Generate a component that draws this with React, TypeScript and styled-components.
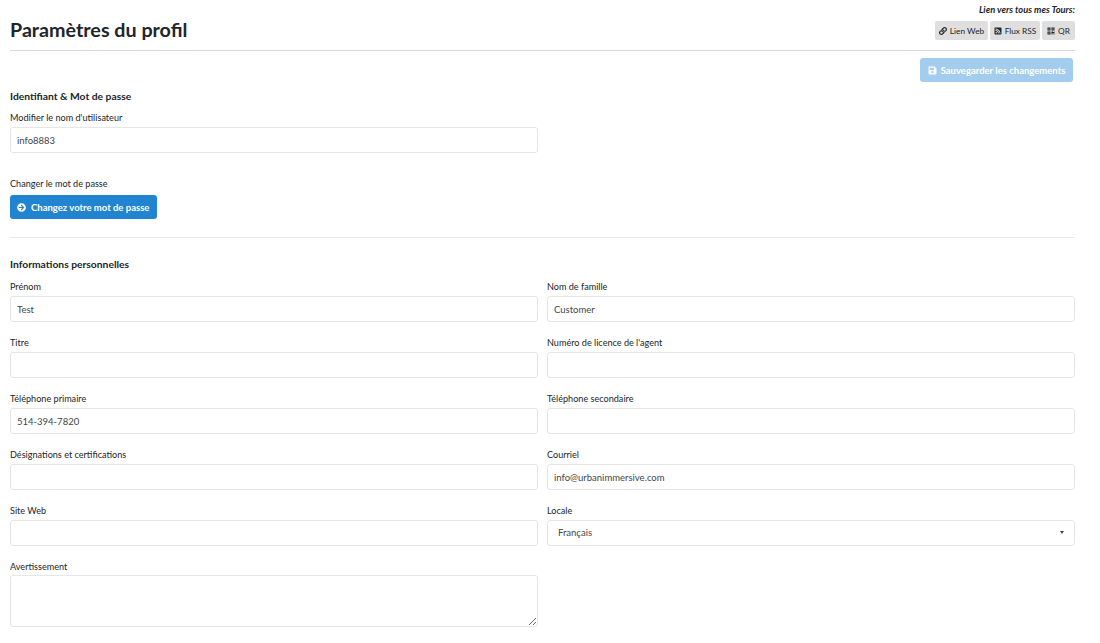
import React from "react";
import styled, { createGlobalStyle } from "styled-components";
import { FaLink, FaSave, FaArrowCircleRight, FaRssSquare, FaQrcode } from "react-icons/fa";

const GlobalStyle = createGlobalStyle`
  html, body {
    margin: 0;
    padding: 0;
    background: #fff;
    font-family: Lato, "Liberation Sans", sans-serif;
    color: #212529;
  }
`;

const Page = styled.div`
  width: 1065px;
  height: 643px;
  overflow: hidden;
  padding-left: 10px;
`;

const Header = styled.header`
  display: flex;
  justify-content: space-between;
  align-items: flex-end;
  height: 50px;
  border-bottom: 1px solid #d9d9d9;
`;

const Title = styled.h1`
  margin: 0 0 8px 0;
  font-size: 19.7px;
  line-height: 24px;
  font-weight: 700;
  color: #212529;
`;

const TourLinks = styled.div`
  display: flex;
  flex-direction: column;
  align-items: flex-end;
  padding-bottom: 10px;
`;

const TourLabel = styled.span`
  font-size: 9.3px;
  line-height: 12px;
  font-style: italic;
  font-weight: 700;
  margin-bottom: 5px;
`;

const TourButtons = styled.div`
  display: flex;
  gap: 2px;
`;

const TourButton = styled.button<{ $width: number }>`
  display: flex;
  align-items: center;
  justify-content: center;
  gap: 3px;
  width: ${(props) => props.$width}px;
  height: 19px;
  padding: 0;
  border: none;
  border-radius: 2px;
  background: #dfdfdf;
  color: #212529;
  font-family: inherit;
  font-size: 8.3px;
  white-space: nowrap;
`;

const SaveRow = styled.div`
  display: flex;
  justify-content: flex-end;
  padding: 7px 2px 0 0;
`;

const SaveButton = styled.button`
  display: flex;
  align-items: center;
  justify-content: center;
  gap: 4px;
  height: 24px;
  width: 153px;
  padding: 0;
  border: none;
  border-radius: 3px;
  background: #a3cdee;
  color: #fff;
  font-family: inherit;
  font-size: 9.5px;
  font-weight: 700;
  white-space: nowrap;
`;

const SectionTitle = styled.h2`
  margin: 0;
  font-size: 10.3px;
  line-height: 14px;
  font-weight: 700;
  color: #212529;
`;

const AccountSection = styled.section`
  margin-top: 7px;
  border-bottom: 1px solid #e8e8e8;
  padding-bottom: 18px;
`;

const HalfColumn = styled.div`
  width: 528px;
`;

const Label = styled.label`
  display: block;
  height: 13px;
  font-size: 9.1px;
  line-height: 13px;
  color: #212529;
`;

const Field = styled.div<{ $spaced?: boolean }>`
  display: flex;
  flex-direction: column;
  gap: 3px;
  margin-top: ${(props) => (props.$spaced ? "8px" : "0")};
`;

const TextInput = styled.input`
  box-sizing: border-box;
  width: 100%;
  height: 26px;
  padding: 0 6px;
  border: 1px solid #e6e6e6;
  border-radius: 3px;
  background: #fff;
  color: #3f464c;
  font-family: inherit;
  font-size: 9.5px;
  outline: none;
`;

const TextArea = styled.textarea`
  box-sizing: border-box;
  display: block;
  width: 100%;
  height: 52px;
  margin-top: -1px;
  padding: 6px;
  border: 1px solid #e6e6e6;
  border-radius: 3px;
  background: #fff;
  font-family: inherit;
  font-size: 9.5px;
  outline: none;
`;

const SelectBox = styled.div`
  box-sizing: border-box;
  display: flex;
  align-items: center;
  justify-content: space-between;
  height: 26px;
  padding: 0 10px 1px 10px;
  border: 1px solid #e6e6e6;
  border-radius: 3px;
  color: #3f464c;
  font-size: 9.5px;
`;

const Caret = styled.span`
  width: 0;
  height: 0;
  border-left: 2.5px solid transparent;
  border-right: 2.5px solid transparent;
  border-top: 3px solid #444;
`;

const PasswordField = styled.div`
  margin-top: 24px;
`;

const PasswordButton = styled.button`
  display: flex;
  align-items: center;
  gap: 5px;
  width: 147px;
  height: 24px;
  margin-top: 5px;
  padding: 0 0 0 7px;
  border: none;
  border-radius: 3px;
  background: #2184d0;
  color: #fff;
  font-family: inherit;
  font-size: 9.5px;
  font-weight: 700;
  white-space: nowrap;
`;

const PersonalSection = styled.section`
  margin-top: 19px;
`;

const FieldGrid = styled.div`
  display: grid;
  grid-template-columns: 528px 528px;
  column-gap: 9px;
  row-gap: 14px;
  margin-top: 9px;
`;

const personalFields = [
  { label: "Prénom", value: "Test" },
  { label: "Nom de famille", value: "Customer" },
  { label: "Titre", value: "" },
  { label: "Numéro de licence de l'agent", value: "" },
  { label: "Téléphone primaire", value: "514-394-7820" },
  { label: "Téléphone secondaire", value: "" },
  { label: "Désignations et certifications", value: "" },
  { label: "Courriel", value: "info@urbanimmersive.com" },
  { label: "Site Web", value: "" },
];

export default function App() {
  return (
    <Page>
      <GlobalStyle />
      <Header>
        <Title>Paramètres du profil</Title>
        <TourLinks>
          <TourLabel>Lien vers tous mes Tours:</TourLabel>
          <TourButtons>
            <TourButton $width={53}>
              <FaLink size={8} /> Lien Web
            </TourButton>
            <TourButton $width={50}>
              <FaRssSquare size={8} /> Flux RSS
            </TourButton>
            <TourButton $width={33}>
              <FaQrcode size={8} /> QR
            </TourButton>
          </TourButtons>
        </TourLinks>
      </Header>
      <SaveRow>
        <SaveButton>
          <FaSave size={9} /> Sauvegarder les changements
        </SaveButton>
      </SaveRow>
      <AccountSection>
        <SectionTitle>Identifiant &amp; Mot de passe</SectionTitle>
        <HalfColumn>
          <Field $spaced>
            <Label>Modifier le nom d'utilisateur</Label>
            <TextInput defaultValue="info8883" />
          </Field>
          <PasswordField>
            <Label>Changer le mot de passe</Label>
            <PasswordButton>
              <FaArrowCircleRight size={9} /> Changez votre mot de passe
            </PasswordButton>
          </PasswordField>
        </HalfColumn>
      </AccountSection>
      <PersonalSection>
        <SectionTitle>Informations personnelles</SectionTitle>
        <FieldGrid>
          {personalFields.map((field) => (
            <Field key={field.label}>
              <Label>{field.label}</Label>
              <TextInput defaultValue={field.value} />
            </Field>
          ))}
          <Field>
            <Label>Locale</Label>
            <SelectBox>
              Français
              <Caret />
            </SelectBox>
          </Field>
          <Field>
            <Label>Avertissement</Label>
            <TextArea />
          </Field>
        </FieldGrid>
      </PersonalSection>
    </Page>
  );
}
